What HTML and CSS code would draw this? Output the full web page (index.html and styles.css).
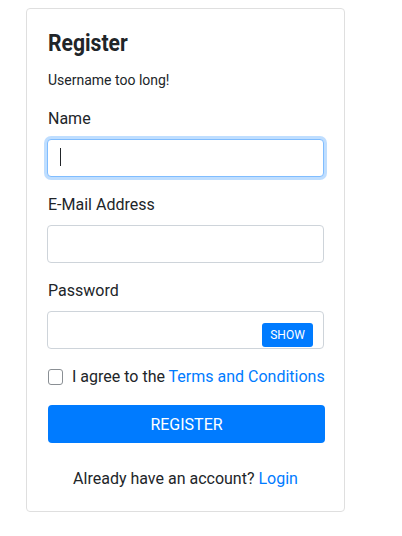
FILE: index.html
```html
<!DOCTYPE html>
<html>
<head>
<meta charset="utf-8">
<link rel="stylesheet" href="styles.css">
</head>
<body>
<div class="card">
  <h3 class="title">Register</h3>
  <div class="error">Username too long!</div>
  <div class="group">
    <label class="label">Name</label>
    <div class="field">
      <input class="input focused" type="text">
      <span class="caret"></span>
    </div>
  </div>
  <div class="group">
    <label class="label">E-Mail Address</label>
    <div class="field"><input class="input" type="email"></div>
  </div>
  <div class="group">
    <label class="label">Password</label>
    <div class="field">
      <input class="input" type="password">
      <button class="show" type="button">SHOW</button>
    </div>
  </div>
  <div class="check">
    <span class="box"></span>
    <span class="check-text">I agree to the <a class="link" href="#">Terms and Conditions</a></span>
  </div>
  <button class="submit" type="button">REGISTER</button>
  <div class="footer">Already have an account? <a class="link" href="#">Login</a></div>
</div>
</body>
</html>
```
FILE: styles.css
```css
body {
  margin: 8px 0 0 26px;
  font-family: Roboto, "Liberation Sans", sans-serif;
  color: #212529;
  background: #fff;
}
.card {
  width: 277px;
  padding: 20px;
  border: 1px solid #dfdfdf;
  border-radius: 4px;
  display: flex;
  flex-direction: column;
}
.title {
  margin: 0 0 12px 1px;
  font-size: 24px;
  line-height: 29px;
  font-weight: 700;
  transform: scaleX(0.88);
  transform-origin: left center;
}
.error {
  font-size: 14px;
  line-height: 21px;
  margin-left: 1px;
}
.group {
  display: flex;
  flex-direction: column;
  margin-top: 16px;
}
.label {
  font-size: 16px;
  line-height: 24px;
  margin: 0 0 8px 1px;
}
.field {
  position: relative;
  height: 38px;
}
.input {
  box-sizing: border-box;
  width: 100%;
  height: 38px;
  margin: 0;
  padding: 6px 12px;
  border: 1px solid #ced4da;
  border-radius: 4px;
  font: inherit;
  font-size: 16px;
  outline: none;
  background: #fff;
}
.input.focused {
  border-color: #80bdff;
  box-shadow: 0 0 0 3px rgba(0, 123, 255, 0.25);
}
.caret {
  position: absolute;
  left: 13px;
  top: 9px;
  width: 1px;
  height: 18px;
  background: #212529;
}
.show {
  position: absolute;
  right: 11px;
  bottom: 2px;
  width: 51px;
  height: 24px;
  padding: 0;
  border: none;
  border-radius: 3px;
  background: #007bff;
  color: #fff;
  font-family: Roboto, "Liberation Sans", sans-serif;
  font-size: 12px;
}
.check {
  display: flex;
  align-items: center;
  gap: 9px;
  margin-top: 16px;
  font-size: 16px;
  line-height: 24px;
  margin-left: 1px;
  white-space: nowrap;
}
.box {
  box-sizing: border-box;
  flex: none;
  width: 15px;
  height: 16px;
  border: 1px solid #8a8f94;
  border-radius: 3px;
  background: #fff;
}
.link {
  color: #007bff;
  text-decoration: none;
}
.submit {
  margin: 16px 0 0 1px;
  height: 38px;
  width: 277px;
  border: none;
  border-radius: 4px;
  background: #007bff;
  color: #fff;
  font-family: Roboto, "Liberation Sans", sans-serif;
  font-size: 16px;
  padding: 0;
}
.footer {
  margin-top: 24px;
  text-align: center;
  font-size: 16px;
  line-height: 24px;
}
```
